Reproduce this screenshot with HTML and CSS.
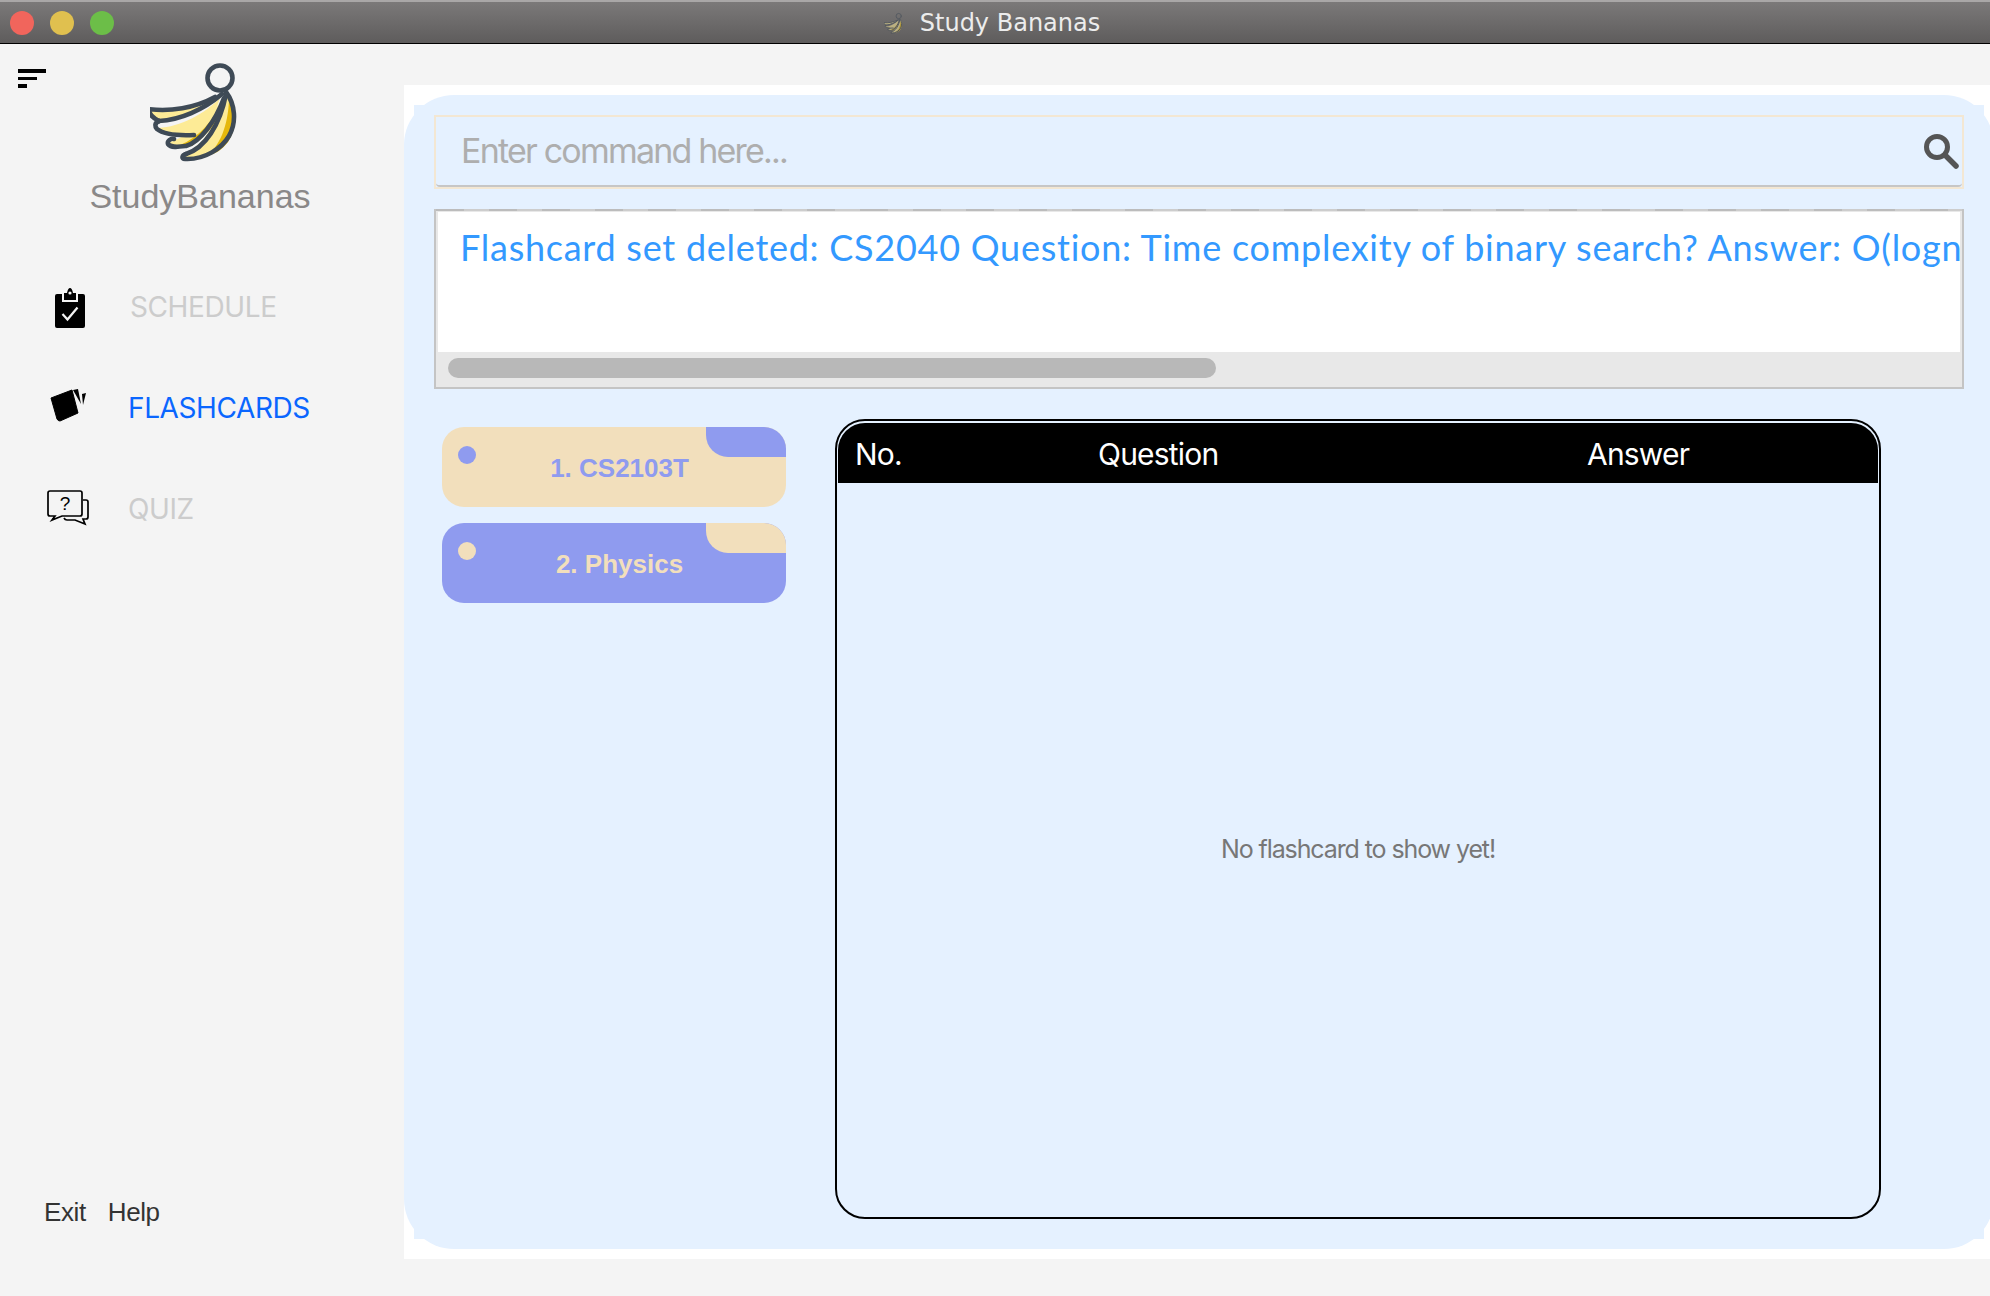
FILE: index.html
```html
<!DOCTYPE html>
<html lang="en">
<head>
<meta charset="utf-8">
<title>Study Bananas</title>
<link rel="stylesheet" href="styles.css">
</head>
<body>
<svg class="defs" width="0" height="0" aria-hidden="true">
  <symbol id="banana" viewBox="150 60 100 102" overflow="visible">
    <g stroke-linejoin="round" stroke-linecap="round">
      <path d="M182 155 C200 148 218 125 228 92 C238 110 236 128 228 142 C218 154 200 160 187 159 Z" fill="#fdeb96"/>
      <path d="M205 156 C220 148 228 125 229 100 C238 115 236 130 228 142 C222 150 214 155 205 156 Z" fill="#e5b80b"/>
      <path d="M167 143 C180 140 205 125 222 100 C218 120 205 135 190 146 C182 148 172 147 167 143 Z" fill="#fdeb96"/>
      <path d="M180 145 C198 138 212 122 224 100 C220 122 206 136 192 146 Z" fill="#e5b80b"/>
      <path d="M155 128 C175 128 200 118 220 98 C215 115 205 128 195 135 C180 136 165 135 155 128 Z" fill="#fdeb96"/>
      <path d="M148 109 C170 112 195 108 216 97 C205 108 180 118 159 121 C154 118 150 114 148 109 Z" fill="#fdeb96"/>
      <g fill="none" stroke="#3e4a56" stroke-width="4.6">
        <circle cx="220" cy="78" r="12.5"/>
        <path d="M159 121 C153 118 149 114 148 109 C170 112 195 108 215 97"/>
        <path d="M159 121 C180 120 203 110 222 94"/>
        <path d="M159 121 C154 123 155 127 157 129 C162 133 172 136 194 135"/>
        <path d="M174 139 C171 138 167 141 168 144 C171 148 178 147 186 146 C200 142 215 122 224 98"/>
        <path d="M186 154 C182 155 181 159 185 159 C205 160 222 148 229 136 C237 122 235 104 226 92"/>
        <path d="M186 154 C205 148 220 125 226 94"/>
      </g>
    </g>
  </symbol>
</svg>

<header class="titlebar">
  <div class="lights">
    <span class="light light-red"></span>
    <span class="light light-yellow"></span>
    <span class="light light-green"></span>
  </div>
  <div class="window-title">
    <svg class="window-logo"><use href="#banana"/></svg>
    <span>Study Bananas</span>
  </div>
  <div></div>
</header>

<div class="app">
  <aside class="sidebar">
    <div class="sidebar-top">
      <div class="menu-toggle"><i class="bar bar-l"></i><i class="bar bar-m"></i><i class="bar bar-s"></i></div>
      <div class="brand">
        <svg class="brand-logo"><use href="#banana"/></svg>
        <div class="brand-name">StudyBananas</div>
      </div>
    </div>
    <nav class="nav">
      <div class="nav-item">
        <svg class="nav-icon" viewBox="48 283 44 48">
          <path d="M55 296 q0 -2 2 -2 h5 v8 h16 v-8 h5 q2 0 2 2 v30 q0 2 -2 2 h-26 q-2 0 -2 -2 z" fill="#000"/>
          <path d="M64 300 v-7 h3 q1 -5 3 -5 q2 0 3 5 h3 v7 z" fill="#000"/>
          <circle cx="70" cy="293" r="1.6" fill="#f4f4f4"/>
          <path d="M62.500 314 l5 5.500 l10 -12" fill="none" stroke="#f4f4f4" stroke-width="2.200"/>
        </svg>
        <span class="nav-label nav-label-first">SCHEDULE</span>
      </div>
      <div class="nav-item">
        <svg class="nav-icon" viewBox="48 388 44 48">
          <path d="M51 402 L72 394 L78 417 L60 425 Q58 425 57 423 Z" fill="#000" stroke="#000" stroke-width="1" stroke-linejoin="round"/>
          <path d="M73 394 L78 393 L81 408 Z" fill="#000"/>
          <path d="M82 398 L86 397 L83 409 Z" fill="#000"/>
        </svg>
        <span class="nav-label nav-label-active">FLASHCARDS</span>
      </div>
      <div class="nav-item">
        <svg class="nav-icon" viewBox="48 485 44 48">
          <path d="M50 491 H80 Q82 491 82 493 V514 Q82 516 80 516 H62 L52 520 L55 516 H50 Q48 516 48 514 V493 Q48 491 50 491 Z" fill="none" stroke="#000" stroke-width="1.700"/>
          <path d="M83 500 H86 Q88 500 88 502 V517 Q88 519 86 519 H83 L85 524 L75 520 H67 Q65 520 64 518" fill="none" stroke="#000" stroke-width="1.700"/>
          <text x="65" y="510" class="quiz-mark">?</text>
        </svg>
        <span class="nav-label">QUIZ</span>
      </div>
    </nav>
    <div class="sidebar-footer">
      <span>Exit</span>
      <span>Help</span>
    </div>
  </aside>

  <main class="stage">
    <div class="panel">
      <div class="command">
        <div class="command-inner">
          <span class="command-placeholder">Enter command here...</span>
          <svg class="search-icon" viewBox="0 0 36 40">
            <circle cx="14" cy="15" r="10.500" fill="none" stroke="#555" stroke-width="5"/>
            <path d="M22 23 L33 34" fill="none" stroke="#555" stroke-width="5.500" stroke-linecap="round"/>
          </svg>
        </div>
      </div>

      <div class="result">
        <div class="result-text">Flashcard set deleted: CS2040 Question: Time complexity of binary search? Answer: O(logn)</div>
        <div class="scrollbar"><div class="scroll-thumb"></div></div>
      </div>

      <div class="content">
        <div class="set-list">
          <div class="set-card set-beige"><span class="set-dot"></span><span class="set-tab"></span><span class="set-name">1. CS2103T</span></div>
          <div class="set-card set-blue"><span class="set-dot"></span><span class="set-tab"></span><span class="set-name">2. Physics</span></div>
        </div>
        <section class="table">
          <div class="table-head">
            <span>No.</span>
            <span>Question</span>
            <span>Answer</span>
          </div>
          <div class="table-empty">No flashcard to show yet!</div>
        </section>
      </div>
    </div>
  </main>
</div>
</body>
</html>
```

FILE: styles.css
```css
* { box-sizing: border-box; }

html, body {
  margin: 0;
  height: 100%;
  overflow: hidden;
}

body {
  display: flex;
  flex-direction: column;
  background: #f4f4f4;
  font-family: "Inter", "Liberation Sans", sans-serif;
}

.defs { position: absolute; }

/* window chrome */
.titlebar {
  flex: none;
  height: 44px;
  display: grid;
  grid-template-columns: 1fr auto 1fr;
  align-items: center;
  background: linear-gradient(#7b7979, #5e5c5c);
  border-top: 2px solid #a9a7a7;
  border-bottom: 1px solid #000;
}

.lights {
  display: flex;
  gap: 16px;
  padding-left: 10px;
}

.light {
  width: 24px;
  height: 24px;
  border-radius: 50%;
}
.light-red { background: #f1655c; }
.light-yellow { background: #e0c04f; }
.light-green { background: #6cbe48; }

.window-title {
  display: flex;
  align-items: center;
  gap: 15px;
  padding: 1px 6px 0 0;
  color: #ececec;
  font-family: "DejaVu Sans", sans-serif;
  font-size: 24px;
  line-height: 40px;
}

.window-logo {
  width: 21px;
  height: 24px;
  opacity: 0.55;
}

/* layout */
.app {
  flex: 1;
  min-height: 0;
  display: flex;
}

.sidebar {
  flex: none;
  width: 404px;
  display: flex;
  flex-direction: column;
  padding-top: 16px;
}

.sidebar-top { display: flex; }

.menu-toggle {
  flex: none;
  width: 28px;
  margin: 9px 0 0 18px;
  display: flex;
  flex-direction: column;
  gap: 4px;
}

.bar { display: block; height: 3.500px; background: #000; }
.bar-l { width: 28px; }
.bar-m { width: 19px; }
.bar-s { width: 9px; }

.brand {
  width: 308px;
  display: flex;
  flex-direction: column;
  align-items: center;
}

.brand-logo {
  width: 100px;
  height: 102px;
}

.brand-name {
  margin-top: 14px;
  color: #8a8888;
  font-family: "Liberation Sans", sans-serif;
  font-size: 34px;
  line-height: 40px;
}

.nav {
  margin-top: 40px;
  display: flex;
  flex-direction: column;
}

.nav-item {
  height: 101px;
  display: flex;
  align-items: center;
  padding-left: 48px;
}

.nav-icon {
  flex: none;
  width: 44px;
  height: 48px;
  margin-right: 36px;
  overflow: visible;
}

.quiz-mark {
  font-family: "Liberation Sans", sans-serif;
  font-size: 19px;
  text-anchor: middle;
}

.nav-label {
  color: #cccccc;
  font-size: 28px;
  letter-spacing: -0.4px;
}
.nav-label-first { margin-left: 2px; }
.nav-label-active { color: #0a66ff; }

.sidebar-footer {
  margin-top: auto;
  padding: 0 0 69px 44px;
  display: flex;
  gap: 22px;
  color: #333;
  font-family: "Liberation Sans", sans-serif;
  font-size: 26px;
  letter-spacing: -0.4px;
  line-height: 30px;
}

/* stage */
.stage {
  flex: 1;
  min-width: 0;
  margin: 41px 0 37px;
  padding: 10px 0;
  background: #fff;
  display: flex;
}

.panel {
  position: relative;
  flex: none;
  width: 1590px;
  display: flex;
  flex-direction: column;
  padding: 20px 30px 30px;
  background: #e5f1ff;
  border-radius: 50px;
}

.panel::before {
  content: "";
  position: absolute;
  inset: 10px;
  background:
    linear-gradient(#e5f1ff, #e5f1ff) left top / 10px 10px no-repeat,
    linear-gradient(#e5f1ff, #e5f1ff) right top / 10px 10px no-repeat,
    linear-gradient(#e5f1ff, #e5f1ff) left bottom / 10px 10px no-repeat,
    linear-gradient(#e5f1ff, #e5f1ff) right bottom / 10px 10px no-repeat;
}

/* command box */
.command {
  position: relative;
  flex: none;
  height: 74px;
  border: 2px solid #f3e7d3;
}

.command-inner {
  height: 100%;
  display: flex;
  align-items: center;
  justify-content: space-between;
  padding: 0 3px 2px 25px;
  border-bottom: 2px solid #c6c6c6;
  border-radius: 4px;
}

.command-placeholder {
  color: #aeaeae;
  font-size: 34px;
  letter-spacing: -1.800px;
}

.search-icon {
  width: 36px;
  height: 40px;
  margin-top: 4px;
}

/* result box */
.result {
  position: relative;
  flex: none;
  height: 180px;
  margin-top: 20px;
  display: flex;
  flex-direction: column;
  padding: 1px 2px 2px;
  border: 2px solid #c4c4c4;
  background: #e8e8e8;
}

.result::before {
  content: "";
  position: absolute;
  left: 0;
  right: 0;
  top: -2px;
  height: 2px;
  background: repeating-linear-gradient(90deg, #bcbcbc 0 28px, #cdcdcd 28px 53px);
}

.result-text {
  flex: 1;
  min-height: 0;
  padding: 13px 0 0 22px;
  background: #fff;
  color: #3399ff;
  font-family: "Comic Sans MS", "Lato", sans-serif;
  font-size: 36px;
  letter-spacing: 0.740px;
  line-height: 44px;
  white-space: nowrap;
  overflow: hidden;
}

.scrollbar {
  flex: none;
  height: 33px;
  padding: 6px 0 0 10px;
}

.scroll-thumb {
  width: 768px;
  height: 20px;
  border-radius: 10px;
  background: #b8b8b8;
}

/* lower area */
.content {
  flex: 1;
  min-height: 0;
  margin-top: 30px;
  display: flex;
  padding-left: 8px;
  gap: 49px;
}

.set-list {
  flex: none;
  width: 344px;
  padding-top: 8px;
  display: flex;
  flex-direction: column;
  gap: 16px;
}

.set-card {
  position: relative;
  height: 80px;
  display: flex;
  align-items: center;
  justify-content: center;
  padding: 2px 0 0 11px;
  border-radius: 22px;
  overflow: hidden;
  font-family: "Liberation Sans", sans-serif;
  font-size: 26px;
  font-weight: 700;
}

.set-dot {
  position: absolute;
  left: 16px;
  top: 19px;
  width: 18px;
  height: 18px;
  border-radius: 50%;
}

.set-tab {
  position: absolute;
  right: 0;
  top: 0;
  width: 80px;
  height: 30px;
  border-bottom-left-radius: 22px;
}

.set-beige { background: #f2dfbc; color: #8f9bef; }
.set-blue { background: #8f9bef; color: #f2dfbc; }
.set-beige .set-dot, .set-beige .set-tab { background: #8f9bef; }
.set-blue .set-dot, .set-blue .set-tab { background: #f2dfbc; }

/* table */
.table {
  flex: none;
  width: 1046px;
  display: flex;
  flex-direction: column;
  border: 2px solid #000;
  border-radius: 30px;
  padding: 2px 1px 0;
}

.table-head {
  flex: none;
  height: 60px;
  display: grid;
  grid-template-columns: 243px 489px 1fr;
  align-items: center;
  padding: 1px 0 0 17px;
  background: #000;
  border-radius: 27px 27px 0 0;
  color: #fff;
  font-size: 30px;
  letter-spacing: -0.8px;
}

.table-empty {
  flex: 1;
  display: flex;
  align-items: center;
  justify-content: center;
  padding-bottom: 2px;
  color: #777;
  font-size: 25px;
  letter-spacing: -1.100px;
}
```
